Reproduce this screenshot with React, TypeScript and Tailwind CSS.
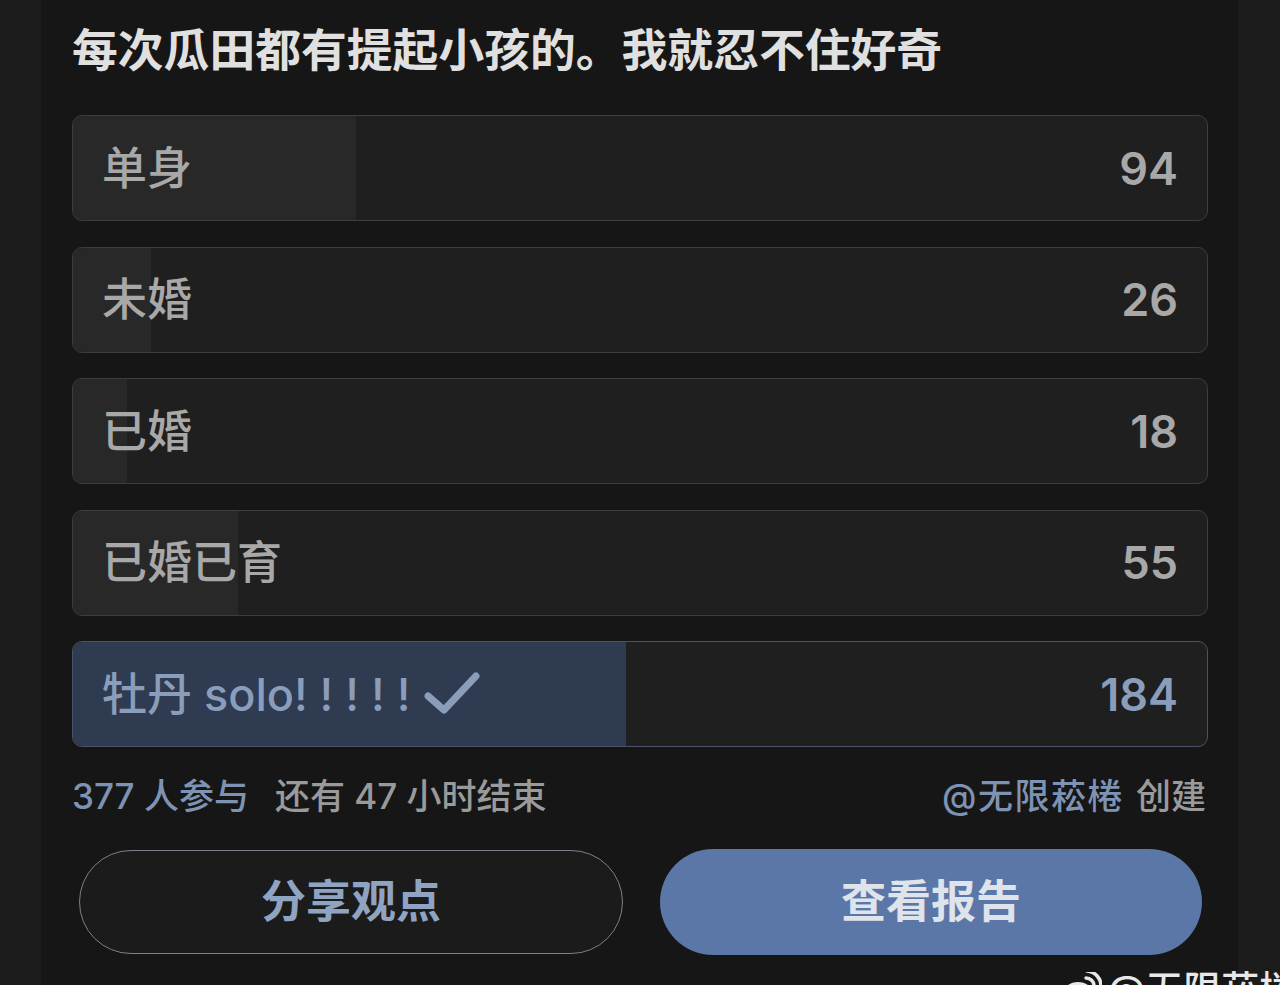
import React from "react";

const options = [
  { label: "单身", count: 94 },
  { label: "未婚", count: 26 },
  { label: "已婚", count: 18 },
  { label: "已婚已育", count: 55 },
  { label: "牡丹 solo! ! ! ! !", count: 184, selected: true },
];
const total = 377;

const font = { fontFamily: 'Inter, "Noto Sans CJK SC", sans-serif' };

function Check() {
  return (
    <svg width="56" height="44" viewBox="0 0 56 44" className="ml-[14px] shrink-0">
      <path d="M4 24 L20 38 L52 4" fill="none" stroke="#8a9dba" strokeWidth="7" strokeLinecap="round" strokeLinejoin="round" />
    </svg>
  );
}

function WeiboLogo() {
  return (
    <svg width="40" height="30" viewBox="0 0 40 30">
      <ellipse cx="16" cy="20" rx="14" ry="10" fill="#e8e8e8" />
      <path d="M24 6 A8 8 0 0 1 32 14" fill="none" stroke="#e8e8e8" strokeWidth="3.5" strokeLinecap="round" />
      <path d="M25 -1 A15 15 0 0 1 39 14" fill="none" stroke="#e8e8e8" strokeWidth="3.5" strokeLinecap="round" />
    </svg>
  );
}

export default function App() {
  return (
    <div
      className="relative w-[1280px] h-[985px] overflow-hidden bg-[#1c1c1c] flex"
      style={font}
    >
      <div className="ml-[41px] w-[1197px] h-full bg-[#161616] pl-[31px] pr-[30px] pt-[28px] flex flex-col">
        <div className="text-[45.8px] leading-[45px] font-bold text-[#e0e0e0] whitespace-nowrap">
          每次瓜田都有提起小孩的。我就忍不住好奇
        </div>
        <div className="mt-[42px] flex flex-col gap-[25.5px]">
          {options.map((o) => {
            const pct = (o.count / total) * 100;
            return (
              <div
                key={o.label}
                className={
                  "relative h-[106px] rounded-[10px] border overflow-hidden flex items-center justify-between pl-[29px] pr-[31px] bg-[#1f1f1f] " +
                  (o.selected ? "border-[#4a5466]" : "border-[#3d3d3d]")
                }
              >
                <div
                  className={"absolute left-0 top-0 bottom-0 " + (o.selected ? "bg-[#2e3b50]" : "bg-[#282828]")}
                  style={{ width: pct + "%" }}
                />
                <div
                  className={
                    "relative flex items-center text-[45px] leading-none font-medium whitespace-pre " +
                    (o.selected ? "text-[#8a9dba]" : "text-[#a8a8a8]")
                  }
                >
                  <span>{o.label}</span>
                  {o.selected && <Check />}
                </div>
                <div
                  className={
                    "relative text-[45px] leading-none font-semibold mr-[-2px] " +
                    (o.selected ? "text-[#8a9dba]" : "text-[#a8a8a8]")
                  }
                >
                  {o.count}
                </div>
              </div>
            );
          })}
        </div>
        <div className="mt-[32px] flex items-center justify-between text-[35px] leading-[35px] font-medium whitespace-nowrap pr-[2px]">
          <div className="flex items-center">
            <span className="text-[#7e93b4]">377 人参与</span>
            <span className="ml-[26px] text-[#9a9a9a]">还有 47 小时结束</span>
          </div>
          <div className="flex items-center">
            <span className="text-[#7e93b4] tracking-[1.5px]">@无限菘棬</span>
            <span className="ml-[12px] text-[#9a9a9a]">创建</span>
          </div>
        </div>
        <div className="mt-[36px] flex gap-[37px] pl-[7px] pr-[6px]">
          <div className="flex-1 h-[104px] rounded-full border-[1.5px] border-[#7c8088] bg-[#1b1b1b] flex items-center justify-center text-[45px] font-bold text-[#8fa3c2]">
            分享观点
          </div>
          <div className="flex-1 h-[106px] -mt-[1px] rounded-full bg-[#5a77a8] flex items-center justify-center text-[45px] font-bold text-[#dfe3ea]">
            查看报告
          </div>
        </div>
      </div>
      <div className="absolute left-[1062px] top-[972px] flex items-start gap-[6px] whitespace-nowrap">
        <WeiboLogo />
        <span className="text-[38px] leading-[38px] font-medium text-[#e8e8e8] -mt-[2px]">@无限菘棬</span>
      </div>
    </div>
  );
}
